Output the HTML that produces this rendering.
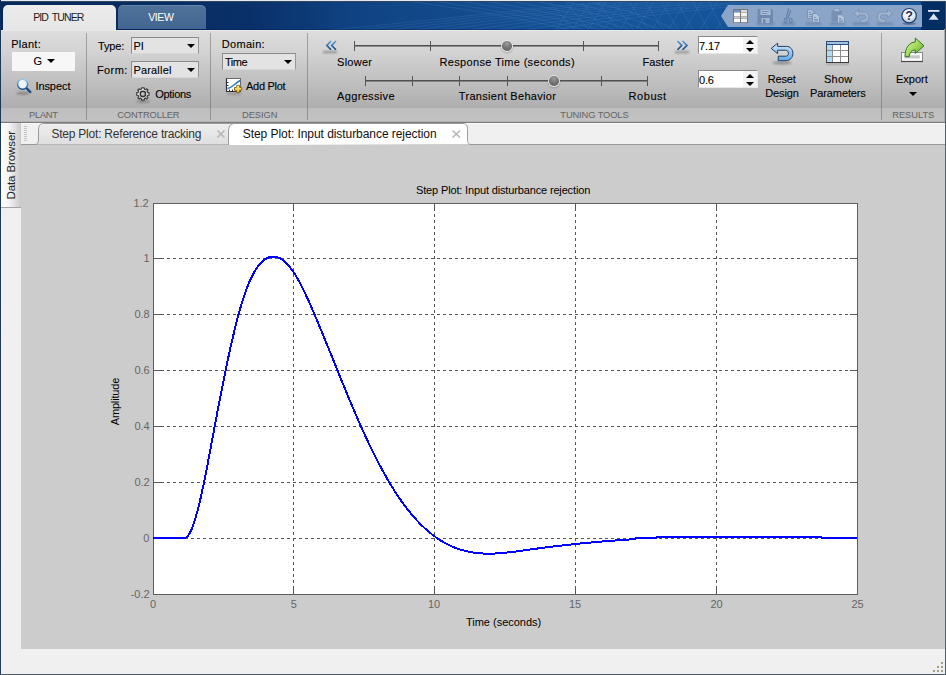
<!DOCTYPE html>
<html><head><meta charset="utf-8"><title>PID Tuner</title>
<style>
html,body{margin:0;padding:0}
body{width:946px;height:675px;overflow:hidden;position:relative;background:#f0f0f0;font-family:"Liberation Sans","DejaVu Sans",sans-serif}
.a{position:absolute}
.t{position:absolute;white-space:nowrap;line-height:1;font-family:"Liberation Sans","DejaVu Sans",sans-serif}
#hdr{left:0;top:0;width:946px;height:30px;background:linear-gradient(90deg,#06295b 0,#0a3069 250px,#0f4282 350px,#134a8c 450px,#16549a 600px,#16549a 921px,#032e63 921px)}
#rib{left:1px;top:30px;width:943px;height:78px;background:linear-gradient(180deg,#dedede 0,#d4d4d4 20px,#bababa 60px,#aeaeae 78px)}
#strip{left:1px;top:108px;width:943px;height:13px;background:linear-gradient(180deg,#bdbdbd,#c3c3c3)}
#ribb{left:1px;top:121px;width:944px;height:3px;background:linear-gradient(180deg,#b2b2b2 0,#b2b2b2 1px,#7e7e7e 1px,#7e7e7e 2px,#f9f9f9 2px)}
.sep{position:absolute;top:33px;height:87px;width:1px;background:rgba(90,90,90,.45)}
.combo{position:absolute;height:15px;background:#e3e3e3;border:1px solid;border-color:#8c8c8c #969696 #d6d6d6 #8c8c8c;box-sizing:content-box}
.arr{position:absolute;width:0;height:0;border-left:4px solid transparent;border-right:4px solid transparent;border-top:4px solid #000}
.arru{position:absolute;width:0;height:0;border-left:4px solid transparent;border-right:4px solid transparent;border-bottom:4px solid #000}
.spin{position:absolute;width:58px;height:16px;background:#fff;border:1px solid;border-color:#8a8a8a #e8e8e8 #e8e8e8 #8a8a8a}
.spin i{position:absolute;right:0;top:0;width:14px;height:16px;background:#f3f3f3}
.sl{position:absolute;height:1px;background:#505050;box-shadow:0 1px 0 rgba(70,70,70,.5)}
.tk{position:absolute;width:1px;height:10px;background:#555}
.knob{position:absolute;width:10px;height:10px;border-radius:50%;background:radial-gradient(circle at 50% 25%,#9c9c9c 0,#7c7c7c 40%,#565656 100%);box-shadow:0 0 0 1px rgba(236,236,236,.95),0 1px 2px 1px rgba(0,0,0,.22)}
svg{position:absolute;overflow:visible}
.g{stroke:#555;stroke-width:1;stroke-dasharray:3 3;shape-rendering:crispEdges}
.k{stroke:#555;stroke-width:1;shape-rendering:crispEdges}
</style></head><body>
<div class="a" id="hdr"></div>
<svg class="a" style="left:0;top:0" width="721" height="30" viewBox="0 0 721 30"><g fill="none" stroke="#7fb0e6" stroke-opacity=".13" stroke-width="1"><path d="M330 30 C420 22 510 10 630 0"/><path d="M358 30 C448 21 538 9 652 0"/><path d="M386 30 C476 20 566 9 674 0"/><path d="M414 30 C504 19 594 8 696 0"/><path d="M442 30 C532 18 622 8 718 0"/><path d="M470 30 C560 17 650 7 740 0"/><path d="M498 30 C588 16 678 7 762 0"/><path d="M526 30 C616 15 706 6 784 0"/><path d="M554 30 C644 14 734 6 806 0"/><path d="M400 0 C460 8 520 18 570 30"/><path d="M426 0 C483 8 539 18 585 30"/><path d="M452 0 C506 8 558 18 600 30"/><path d="M478 0 C529 8 577 18 615 30"/><path d="M504 0 C552 8 596 18 630 30"/><path d="M530 0 C575 8 615 18 645 30"/><path d="M556 0 C598 8 634 18 660 30"/><path d="M582 0 C621 8 653 18 675 30"/><path d="M556 30 L575 0"/><path d="M572 30 L591 0"/><path d="M588 30 L607 0"/><path d="M604 30 L623 0"/><path d="M620 30 L639 0"/><path d="M636 30 L655 0"/><path d="M652 30 L671 0"/><path d="M668 30 L687 0"/><path d="M684 30 L703 0"/><path d="M700 30 L719 0"/><path d="M716 30 L735 0"/><path d="M548 0 L574.0 30"/><path d="M564 0 L588.9 30"/><path d="M580 0 L603.8 30"/><path d="M596 0 L618.7 30"/><path d="M612 0 L633.6 30"/><path d="M628 0 L648.5 30"/><path d="M644 0 L663.4 30"/><path d="M660 0 L678.3 30"/><path d="M676 0 L693.2 30"/><path d="M692 0 L708.1 30"/><path d="M708 0 L723.0 30"/></g></svg>
<!-- ribbon tabs -->
<div class="a" style="left:3px;top:5px;width:113px;height:25px;background:linear-gradient(180deg,#ececec,#e6e6e6);border-radius:5px 5px 0 0"></div>
<div class="a" style="left:118px;top:5px;width:88px;height:24px;background:linear-gradient(180deg,#4f729b,#426690);border-radius:5px 5px 0 0;box-shadow:inset 0 1px 0 rgba(255,255,255,.12)"></div>
<!-- quick access -->
<svg class="a" style="left:720px;top:5px" width="202" height="22" viewBox="0 0 202 22"><path d="M1 11 L8 0 H202 V22 H8 Z" fill="#8ba5c9"/></svg>

<div class="a" id="rib"></div><div class="a" style="left:116px;top:29px;width:830px;height:1px;background:rgba(0,25,90,.35)"></div><div class="a" style="left:1px;top:30px;width:943px;height:1px;background:#ebe9e5"></div><div class="a" id="strip"></div><div class="a" id="ribb"></div>
<div class="sep" style="left:86px"></div><div class="sep" style="left:210px"></div><div class="sep" style="left:307px"></div><div class="sep" style="left:881px"></div>
<!-- plant -->
<div class="a" style="left:12px;top:52px;width:63px;height:19px;background:#f7f7f7"></div>
<div class="arr" style="left:47px;top:59px"></div>
<!-- controller -->
<div class="combo" style="left:131px;top:37px;width:66px"></div><div class="arr" style="left:187px;top:44px"></div>
<div class="combo" style="left:131px;top:61px;width:66px"></div><div class="arr" style="left:187px;top:68px"></div>
<div class="combo" style="left:222px;top:53px;width:72px"></div><div class="arr" style="left:284px;top:60px"></div>
<!-- sliders -->
<div class="sl" style="left:354px;top:45px;width:305px"></div>
<div class="tk" style="left:354px;top:41px"></div><div class="tk" style="left:430px;top:41px"></div><div class="tk" style="left:583px;top:41px"></div><div class="tk" style="left:658px;top:41px"></div>
<div class="sl" style="left:365px;top:80px;width:283px"></div>
<div class="tk" style="left:365px;top:76px"></div><div class="tk" style="left:412px;top:76px"></div><div class="tk" style="left:459px;top:76px"></div><div class="tk" style="left:507px;top:76px"></div><div class="tk" style="left:601px;top:76px"></div><div class="tk" style="left:647px;top:76px"></div>
<div class="knob" style="left:502px;top:41px"></div><div class="knob" style="left:549px;top:76px"></div>
<!-- spinners -->
<div class="spin" style="left:698px;top:36px"><i></i></div><div class="arru" style="left:746px;top:40px"></div><div class="arr" style="left:746px;top:48px"></div>
<div class="spin" style="left:698px;top:70px"><i></i></div><div class="arru" style="left:746px;top:74px"></div><div class="arr" style="left:746px;top:82px"></div>
<div class="arr" style="left:909px;top:92px"></div>

<svg class="a" style="left:0;top:0" width="946" height="675" viewBox="0 0 946 675">
<defs>
<linearGradient id="gb" x1="0" y1="0" x2="0" y2="1"><stop offset="0" stop-color="#5a9ad6"/><stop offset="1" stop-color="#0d4580"/></linearGradient>
<linearGradient id="gring" x1="0" y1="0" x2="0" y2="1"><stop offset="0" stop-color="#9cc6ea"/><stop offset="1" stop-color="#124c88"/></linearGradient>
<linearGradient id="gundo" x1="0" y1="0" x2="0" y2="1"><stop offset="0" stop-color="#cfe8fa"/><stop offset="1" stop-color="#62a8e6"/></linearGradient>
<linearGradient id="ggreen" x1="0" y1="0" x2="1" y2="1"><stop offset="0" stop-color="#e2f6b8"/><stop offset=".5" stop-color="#a4da5c"/><stop offset="1" stop-color="#4e9e28"/></linearGradient>
<linearGradient id="gplus" x1="0" y1="0" x2="0" y2="1"><stop offset="0" stop-color="#fff6b0"/><stop offset="1" stop-color="#e2b01e"/></linearGradient>
<radialGradient id="ggear" cx=".4" cy=".3" r=".8"><stop offset="0" stop-color="#ffffff"/><stop offset="1" stop-color="#b4b4b4"/></radialGradient>
<radialGradient id="ghelp" cx=".45" cy=".3" r=".75"><stop offset="0" stop-color="#ffffff"/><stop offset=".6" stop-color="#e4e8ee"/><stop offset="1" stop-color="#a8b4c4"/></radialGradient>
<filter id="bl" x="-30%" y="-100%" width="160%" height="300%"><feGaussianBlur stdDeviation="1"/></filter>
<filter id="bl2" x="-20%" y="-150%" width="140%" height="400%"><feGaussianBlur stdDeviation=".8"/></filter>
</defs>
<!-- inspect magnifier -->
<ellipse cx="23" cy="93.300" rx="7" ry="1.500" fill="#000" opacity=".28" filter="url(#bl)"/>
<line x1="26.300" y1="88" x2="30.300" y2="92" stroke="#0f4a85" stroke-width="2.400" stroke-linecap="round"/>
<circle cx="22.600" cy="84.300" r="5" fill="#eaf2fa" stroke="url(#gring)" stroke-width="1.500"/>
<path d="M19.500 83.500 a3.200 3.200 0 0 1 3 -2.500" stroke="#fff" stroke-width="1.200" fill="none"/>
<!-- options gear -->
<ellipse cx="143" cy="101.500" rx="7" ry="1.400" fill="#000" opacity=".25" filter="url(#bl)"/>
<g transform="translate(142.900 93.900) scale(.9)">
<path id="gearp" d="M-1.500 -6.800 L1.500 -6.800 L1.800 -5.200 L3.000 -4.700 L4.300 -5.600 L5.600 -4.300 L4.700 -3.000 L5.200 -1.800 L6.800 -1.500 L6.800 1.500 L5.200 1.800 L4.700 3.000 L5.600 4.300 L4.300 5.600 L3.000 4.700 L1.800 5.200 L1.500 6.800 L-1.500 6.800 L-1.800 5.200 L-3.000 4.700 L-4.300 5.600 L-5.600 4.300 L-4.700 3.000 L-5.200 1.800 L-6.800 1.500 L-6.800 -1.500 L-5.200 -1.800 L-4.700 -3.000 L-5.600 -4.300 L-4.300 -5.600 L-3.000 -4.700 L-1.800 -5.200 Z" fill="url(#ggear)" stroke="#3e3e3e" stroke-width="1.350" stroke-linejoin="round"/>
<circle cx="0" cy="0" r="2.900" fill="#c2c2c2" stroke="#2e2e2e" stroke-width="1.500"/>
</g>
<!-- add plot -->
<ellipse cx="234" cy="93.500" rx="8" ry="1.300" fill="#000" opacity=".2" filter="url(#bl)"/>
<rect x="226.500" y="78.500" width="14" height="13" fill="#fff" stroke="#6a6a6a"/>
<path d="M226.500 78.500 V91.500 H240.500" fill="none" stroke="#303030" stroke-width="1.200"/>
<path d="M227 82.500h1.500M227 85.500h1.500M229.500 91v-1.500M232.500 91v-1.500" stroke="#303030" stroke-width="1"/>
<path d="M227.500 88.500 C232 88 234 84 240 80.500" fill="none" stroke="#2f7cc4" stroke-width="1.500"/>
<path d="M236.700 85.300 h2.800 v2.200 h2.200 v2.800 h-2.200 v2.200 h-2.800 v-2.200 h-2.200 v-2.800 h2.200 Z" fill="url(#gplus)" stroke="#8a6414" stroke-width=".9" stroke-linejoin="round"/>
<!-- chevrons -->
<rect x="323" y="51" width="14" height="2.200" fill="#000" opacity=".3" filter="url(#bl)"/>
<path d="M331 41 L326.800 45.400 L331 49.800 M336 41 L331.600 45.400 L336 49.800" fill="none" stroke="url(#gb)" stroke-width="1.600"/>
<rect x="675" y="51" width="14" height="2.200" fill="#000" opacity=".3" filter="url(#bl)"/>
<path d="M677.500 41 L681.800 45.400 L677.500 49.800 M682.500 41 L687 45.400 L682.500 49.800" fill="none" stroke="url(#gb)" stroke-width="1.600"/>
<!-- reset design -->
<ellipse cx="782" cy="62.800" rx="10" ry="1.600" fill="#000" opacity=".3" filter="url(#bl)"/>
<path d="M771.200 48.400 L777.600 43.200 L777.600 46.400 L786.500 46.400 C790.500 46.400 792.900 49.500 792.900 53.500 C792.900 57.500 790 60.700 786 60.700 L778.200 60.700 L778.200 56.200 L785.500 56.200 C787.500 56.200 788.400 55 788.400 53.300 C788.400 51.500 787.500 50.200 785.500 50.200 L777.600 50.200 L777.600 53.600 Z" fill="url(#gundo)" stroke="#1f3f66" stroke-width="1" stroke-linejoin="round"/>
<!-- show parameters table -->
<rect x="826" y="63" width="23" height="2" fill="#000" opacity=".18" filter="url(#bl)"/>
<rect x="826" y="41" width="23" height="22" fill="#8c8c8c"/>
<rect x="826" y="41" width="23" height="4" fill="#2a4a7c"/><rect x="827" y="42" width="21" height="2" fill="#a0c4e0"/>
<rect x="826" y="45" width="1" height="18" fill="#484848"/><rect x="848" y="45" width="1" height="18" fill="#484848"/><rect x="826" y="62" width="23" height="1" fill="#383838"/>
<g fill="#b2dcf6"><rect x="827" y="45" width="5" height="5"/><rect x="827" y="51" width="5" height="5"/><rect x="827" y="57" width="5" height="5"/></g>
<g fill="#fff"><rect x="833" y="45" width="7" height="5"/><rect x="841" y="45" width="7" height="5"/><rect x="833" y="51" width="7" height="5"/><rect x="841" y="51" width="7" height="5"/><rect x="833" y="57" width="7" height="5"/><rect x="841" y="57" width="7" height="5"/></g>
<!-- export -->
<rect x="901.500" y="52.500" width="21" height="9" fill="#fbfbfb" stroke="#8a8a8a"/>
<path d="M901 61.500 H923" stroke="#484848" stroke-width="1.200"/>
<rect x="904.500" y="55.300" width="15.300" height="3.100" fill="#c6c6c6"/>
<path d="M905 56.700 C905 48 909 42.500 915.300 42 L915.300 38 L924 45.800 L915.300 53.600 L915.300 50 C911.500 50 909.500 52.500 909.300 56.700 Z" fill="url(#ggreen)" stroke="#2c7c1c" stroke-width="1" stroke-linejoin="round"/>
<!-- QA icons -->
<g>
<rect x="733" y="9" width="15" height="14" fill="#767676"/>
<rect x="734" y="10" width="6" height="2" fill="#3f72b4"/><rect x="734" y="10.500" width="6" height="1" fill="#8fb6e4"/><rect x="741" y="10" width="6" height="2" fill="#dcdcdc"/>
<rect x="734" y="12.500" width="6" height="4" fill="#fafafa"/><rect x="741" y="12.500" width="6" height="4" fill="#f2f2f2"/>
<rect x="734" y="17" width="6" height="1" fill="#c8c8c8"/><rect x="741" y="17" width="6" height="1" fill="#c8c8c8"/>
<rect x="734" y="18.500" width="6" height="3.700" fill="#fafafa"/><rect x="741" y="18.500" width="6" height="3.700" fill="#f2f2f2"/>
</g>
<g>
<rect x="757" y="22.800" width="17" height="2" fill="#2c4a78" opacity=".38" filter="url(#bl2)"/>
<path d="M757.500 9 H771.500 L773 10.500 V23 H757.500 Z" fill="#6f8aae"/>
<rect x="760.500" y="9.500" width="10" height="5.500" fill="#a9bdd8"/><path d="M762 11.500h7M762 13.500h5" stroke="#7890b2" stroke-width="1"/>
<rect x="761.500" y="18" width="8" height="5" fill="#a2b6d2"/><rect x="763" y="19" width="2.500" height="4" fill="#6f8aae"/>
</g>
<g stroke="#6884ac" fill="none" stroke-width="1.300">
<rect x="782" y="22.800" width="13" height="2" fill="#2c4a78" stroke="none" opacity=".38" filter="url(#bl2)"/>
<path d="M788.800 8 L786.300 18.500 M790.800 10 L787.800 18.500"/>
<ellipse cx="785.600" cy="20.600" rx="1.300" ry="2.200"/><ellipse cx="790.800" cy="20.600" rx="1.300" ry="2.200"/>
</g>
<g>
<rect x="806" y="22.800" width="15" height="2" fill="#2c4a78" opacity=".38" filter="url(#bl2)"/>
<path d="M807.500 9.500 H811.500 L814 12 V18.500 H807.500 Z" fill="#a9bdd8" stroke="#7c94b6" stroke-width="1"/>
<path d="M809 12.500h2M809 14.500h3.500M809 16.500h3.500" stroke="#7c94b6" stroke-width="1"/>
<path d="M812.500 13.500 H816.500 L819.500 16.500 V22.500 H812.500 Z" fill="#b4c6dc" stroke="#7c94b6" stroke-width="1"/>
<path d="M814 17.500h2M814 19.500h4M814 21h4" stroke="#7c94b6" stroke-width="1"/>
</g>
<g>
<rect x="830" y="22.800" width="15" height="2" fill="#2c4a78" opacity=".38" filter="url(#bl2)"/>
<rect x="831.500" y="10.500" width="10.500" height="11" rx="1" fill="#7790b4"/>
<rect x="834" y="8.800" width="5.500" height="2.600" fill="#a9bdd8" stroke="#7c94b6" stroke-width=".8"/>
<path d="M837.500 14.800 H841.500 L844.500 17.500 V23 H837.500 Z" fill="#b4c6dc" stroke="#7c94b6" stroke-width="1"/>
<path d="M839 18.500h2M839 20h4M839 21.600h4" stroke="#7c94b6" stroke-width="1"/>
</g>
<g fill="#a2b5cf" stroke="#7a92b4" stroke-width="1" stroke-linejoin="round">
<rect x="853" y="22.800" width="16" height="2" fill="#2c4a78" stroke="none" opacity=".38" filter="url(#bl2)"/>
<path id="qundo" d="M853.700 13.500 L858.700 9.300 L858.700 12 L864.500 12 C867.500 12 868.900 14.300 868.900 17 C868.900 19.800 867.300 22.300 864.300 22.300 L860.500 22.300 L860.500 19.200 L863.800 19.200 C865.200 19.200 865.800 18.300 865.800 17.100 C865.800 15.900 865.200 15 863.800 15 L858.700 15 L858.700 17.600 Z"/>
<rect x="877" y="22.800" width="16" height="2" fill="#2c4a78" stroke="none" opacity=".38" filter="url(#bl2)"/>
<path d="M892.500 13.500 L887.500 9.300 L887.500 12 L881.700 12 C878.700 12 877.300 14.300 877.300 17 C877.300 19.800 878.900 22.300 881.900 22.300 L885.700 22.300 L885.700 19.200 L882.400 19.200 C881 19.200 880.400 18.300 880.400 17.100 C880.400 15.900 881 15 882.400 15 L887.500 15 L887.500 17.600 Z"/>
</g>
<ellipse cx="909.200" cy="23.600" rx="7" ry="1.300" fill="#1a3050" opacity=".4"/>
<circle cx="909.100" cy="15.700" r="7.200" fill="url(#ghelp)" stroke="#1d3f72" stroke-width="1.200"/>
<text x="909.100" y="20" text-anchor="middle" font-family="Liberation Sans, sans-serif" font-weight="bold" font-size="12.500" fill="#14305c">?</text>
<rect x="928" y="10" width="11.400" height="1.800" fill="#e2eaf4"/>
<path d="M933.700 13.600 L938.600 19.800 H928.800 Z" fill="#dce6f2"/>

</svg>

<!-- doc area -->
<div class="a" style="left:1px;top:123px;width:20px;height:84px;background:linear-gradient(90deg,#fdfdfd 0,#f4f4f4 40%,#c9c9c9 100%)"></div>
<div class="a" style="left:1px;top:207px;width:20px;height:1px;background:#a4a4a4"></div>
<div class="a" style="left:21px;top:144px;width:924px;height:1px;background:#8e8e8e"></div>
<div class="a" style="left:21px;top:145px;width:924px;height:504px;background:#cccccc"></div>
<svg class="a" style="left:0;top:0" width="946" height="675" viewBox="0 0 946 675">
<!-- inactive tab -->
<defs><linearGradient id="gtab" x1="0" y1="0" x2="0" y2="1"><stop offset="0" stop-color="#eeeeee"/><stop offset="1" stop-color="#dedede"/></linearGradient></defs>
<path d="M21.500 144.500 H34.500 C37.800 144.500 38.500 142.500 38.500 139 V130 C38.500 126 40 123.500 43.500 123.500 H234 V144.500" fill="url(#gtab)" stroke="#9a9a9a"/>
<!-- active tab -->
<path d="M228.500 145 V132 C228.500 127 230 123.500 235 123.500 H463 C467.500 123.500 467.500 127 467.500 131 V139 C467.500 143 468.500 144.500 472 144.500" fill="#ffffff" stroke="none"/>
<path d="M228.500 145 V132 C228.500 127 230 123.500 235 123.500 H463 C467.500 123.500 467.500 127 467.500 131 V139 C467.500 143 468.500 144.500 472 144.500 H945" fill="none" stroke="#9a9a9a"/>
<g stroke="#b6b6b6" stroke-width="1.600" fill="none"><path d="M217.500 130.500 l7 7 m0 -7 l-7 7"/><path d="M452.500 130.500 l7.500 7 m0 -7 l-7.500 7"/></g>
<g stroke="#c4c4c4" stroke-width="1" shape-rendering="crispEdges"><path d="M24 126.500h3M24 128.500h3M24 130.500h3M24 132.500h3M24 134.500h3M24 136.500h3M24 138.500h3M24 140.500h3"/></g>
<!-- axes -->
<rect x="153.500" y="203.500" width="704" height="391" fill="#fff" stroke="#5e5e5e" shape-rendering="crispEdges"/>
<line x1="293.5" y1="214" x2="293.5" y2="586" class="g"/>
<line x1="293.5" y1="204" x2="293.5" y2="211" class="k"/><line x1="293.5" y1="586" x2="293.5" y2="594" class="k"/>
<line x1="434.5" y1="214" x2="434.5" y2="586" class="g"/>
<line x1="434.5" y1="204" x2="434.5" y2="211" class="k"/><line x1="434.5" y1="586" x2="434.5" y2="594" class="k"/>
<line x1="575.5" y1="214" x2="575.5" y2="586" class="g"/>
<line x1="575.5" y1="204" x2="575.5" y2="211" class="k"/><line x1="575.5" y1="586" x2="575.5" y2="594" class="k"/>
<line x1="716.5" y1="214" x2="716.5" y2="586" class="g"/>
<line x1="716.5" y1="204" x2="716.5" y2="211" class="k"/><line x1="716.5" y1="586" x2="716.5" y2="594" class="k"/>
<line x1="161" y1="258.5" x2="850" y2="258.5" class="g"/>
<line x1="154" y1="258.5" x2="161" y2="258.5" class="k"/><line x1="850" y1="258.5" x2="857" y2="258.5" class="k"/>
<line x1="161" y1="314.5" x2="850" y2="314.5" class="g"/>
<line x1="154" y1="314.5" x2="161" y2="314.5" class="k"/><line x1="850" y1="314.5" x2="857" y2="314.5" class="k"/>
<line x1="161" y1="370.5" x2="850" y2="370.5" class="g"/>
<line x1="154" y1="370.5" x2="161" y2="370.5" class="k"/><line x1="850" y1="370.5" x2="857" y2="370.5" class="k"/>
<line x1="161" y1="426.5" x2="850" y2="426.5" class="g"/>
<line x1="154" y1="426.5" x2="161" y2="426.5" class="k"/><line x1="850" y1="426.5" x2="857" y2="426.5" class="k"/>
<line x1="161" y1="482.5" x2="850" y2="482.5" class="g"/>
<line x1="154" y1="482.5" x2="161" y2="482.5" class="k"/><line x1="850" y1="482.5" x2="857" y2="482.5" class="k"/>
<line x1="161" y1="538.5" x2="850" y2="538.5" class="g"/>
<line x1="154" y1="538.5" x2="161" y2="538.5" class="k"/><line x1="850" y1="538.5" x2="857" y2="538.5" class="k"/>
<path d="M153,538 L185,538 L186,537.5 L187,536.7 L188,535.7 L189,534.2 L190,532.5 L191,530.5 L192,528.2 L193,525.6 L194,522.7 L195,519.6 L196,516.2 L197,512.6 L198,508.8 L199,504.8 L200,500.7 L201,496.3 L202,491.8 L203,487.1 L204,482.4 L205,477.4 L206,472.4 L207,467.3 L208,462.1 L209,456.9 L210,451.6 L211,446.2 L212,440.9 L213,435.5 L214,430.1 L215,424.8 L216,419.4 L217,414.1 L218,408.9 L219,403.6 L220,398.4 L221,393.3 L222,388.2 L223,383.2 L224,378.2 L225,373.3 L226,368.4 L227,363.6 L228,358.9 L229,354.3 L230,349.7 L231,345.2 L232,340.9 L233,336.6 L234,332.3 L235,328.2 L236,324.2 L237,320.3 L238,316.5 L239,312.8 L240,309.3 L241,305.8 L242,302.5 L243,299.3 L244,296.2 L245,293.3 L246,290.5 L247,287.8 L248,285.3 L249,282.8 L250,280.6 L251,278.4 L252,276.3 L253,274.4 L254,272.6 L255,270.8 L256,269.2 L257,267.7 L258,266.3 L259,265.1 L260,263.9 L261,262.8 L262,261.8 L263,260.9 L264,260.1 L265,259.3 L266,258.7 L267,258.2 L268,257.7 L269,257.3 L270,257.0 L271,256.8 L272,256.6 L273,256.6 L274,256.6 L275,256.7 L276,256.9 L277,257.1 L278,257.4 L279,257.8 L280,258.3 L281,258.9 L282,259.5 L283,260.2 L284,261.0 L285,261.9 L286,262.8 L287,263.8 L288,264.9 L289,266.0 L290,267.2 L291,268.5 L292,269.9 L293,271.3 L294,272.8 L295,274.4 L296,276.0 L297,277.7 L298,279.4 L299,281.2 L300,283.1 L301,285.0 L302,286.9 L303,289.0 L304,291.0 L305,293.1 L306,295.2 L307,297.4 L308,299.6 L309,301.8 L310,304.0 L311,306.3 L312,308.6 L313,310.9 L314,313.3 L315,315.6 L316,318.0 L317,320.4 L318,322.7 L319,325.1 L320,327.5 L321,329.9 L322,332.4 L323,334.8 L324,337.2 L325,339.7 L326,342.1 L327,344.6 L328,347.0 L329,349.5 L330,352.0 L331,354.4 L332,356.9 L333,359.4 L334,361.8 L335,364.3 L336,366.8 L337,369.2 L338,371.7 L339,374.2 L340,376.6 L341,379.1 L342,381.5 L343,384.0 L344,386.4 L345,388.8 L346,391.3 L347,393.7 L348,396.1 L349,398.5 L350,400.9 L351,403.3 L352,405.6 L353,408.0 L354,410.3 L355,412.7 L356,415.0 L357,417.3 L358,419.6 L359,421.9 L360,424.2 L361,426.4 L362,428.7 L363,430.9 L364,433.1 L365,435.3 L366,437.4 L367,439.6 L368,441.7 L369,443.8 L370,445.9 L371,448.0 L372,450.0 L373,452.1 L374,454.1 L375,456.1 L376,458.0 L377,460.0 L378,461.9 L379,463.8 L380,465.7 L381,467.6 L382,469.5 L383,471.3 L384,473.1 L385,474.9 L386,476.6 L387,478.4 L388,480.1 L389,481.8 L390,483.5 L391,485.2 L392,486.8 L393,488.4 L394,490.0 L395,491.6 L396,493.1 L397,494.6 L398,496.1 L399,497.6 L400,499.1 L401,500.5 L402,501.9 L403,503.3 L404,504.7 L405,506.0 L406,507.3 L407,508.6 L408,509.9 L409,511.2 L410,512.4 L411,513.6 L412,514.8 L413,516.0 L414,517.1 L415,518.3 L416,519.4 L417,520.5 L418,521.5 L419,522.6 L420,523.6 L421,524.6 L422,525.6 L423,526.6 L424,527.5 L425,528.4 L426,529.3 L427,530.2 L428,531.1 L429,531.9 L430,532.8 L431,533.6 L432,534.4 L433,535.2 L434,535.9 L435,536.6 L436,537.4 L437,538.1 L438,538.7 L439,539.4 L440,540.1 L441,540.7 L442,541.3 L443,541.9 L444,542.5 L445,543.0 L446,543.6 L447,544.1 L448,544.6 L449,545.1 L450,545.6 L451,546.0 L452,546.5 L453,546.9 L454,547.3 L455,547.7 L456,548.1 L457,548.4 L458,548.8 L459,549.1 L460,549.5 L461,549.8 L462,550.1 L463,550.3 L464,550.6 L465,550.9 L466,551.1 L467,551.3 L468,551.6 L469,551.8 L470,552.0 L471,552.1 L472,552.3 L473,552.5 L474,552.6 L475,552.7 L476,552.9 L477,553.0 L478,553.1 L479,553.2 L480,553.3 L481,553.3 L482,553.4 L483,553.5 L484,553.5 L485,553.5 L486,553.6 L487,553.6 L488,553.6 L489,553.6 L490,553.6 L491,553.6 L492,553.6 L493,553.5 L494,553.5 L495,553.5 L496,553.4 L497,553.4 L498,553.3 L499,553.2 L500,553.2 L501,553.1 L502,553.0 L503,552.9 L504,552.8 L505,552.8 L506,552.7 L507,552.5 L508,552.4 L509,552.3 L510,552.2 L511,552.1 L512,552.0 L513,551.9 L514,551.7 L515,551.6 L516,551.5 L517,551.3 L518,551.2 L519,551.1 L520,550.9 L521,550.8 L522,550.6 L523,550.5 L524,550.4 L525,550.2 L526,550.1 L527,549.9 L528,549.8 L529,549.7 L530,549.5 L531,549.4 L532,549.2 L533,549.1 L534,549.0 L535,548.8 L536,548.7 L537,548.6 L538,548.4 L539,548.3 L540,548.2 L541,548.0 L542,547.9 L543,547.8 L544,547.7 L545,547.5 L546,547.4 L547,547.3 L548,547.1 L549,547.0 L550,546.9 L551,546.8 L552,546.7 L553,546.5 L554,546.4 L555,546.3 L556,546.2 L557,546.1 L558,545.9 L559,545.8 L560,545.7 L561,545.6 L562,545.5 L563,545.4 L564,545.2 L565,545.1 L566,545.0 L567,544.9 L568,544.8 L569,544.7 L570,544.6 L571,544.5 L572,544.4 L573,544.3 L574,544.2 L575,544.1 L576,544.0 L577,543.8 L578,543.7 L579,543.6 L580,543.5 L581,543.4 L582,543.3 L583,543.2 L584,543.1 L585,543.0 L586,543.0 L587,542.9 L588,542.8 L589,542.7 L590,542.6 L591,542.5 L592,542.4 L593,542.3 L594,542.2 L595,542.1 L596,542.0 L597,541.9 L598,541.8 L599,541.8 L600,541.7 L601,541.6 L602,541.5 L603,541.4 L604,541.3 L605,541.3 L606,541.2 L607,541.1 L608,541.0 L609,540.9 L610,540.8 L611,540.8 L612,540.7 L613,540.6 L614,540.5 L615,540.5 L616,540.4 L617,540.3 L618,540.2 L619,540.2 L620,540.1 L621,540.0 L622,539.9 L623,539.9 L624,539.8 L625,539.7 L626,539.7 L627,539.6 L628,539.5 L629,539.5 L630,539.4 L631,539.3 L632,539.3 L633,539.2 L634,539.1 L635,539.1 L636,538.0 L637,538.0 L638,538.0 L639,538.0 L640,538.0 L641,538.0 L642,538.0 L643,538.0 L644,538.0 L645,538.0 L646,538.0 L647,538.0 L648,538.0 L649,538.0 L650,538.0 L651,538.0 L652,538.0 L653,538.0 L654,538.0 L655,538.0 L656,538.0 L657,537.0 L658,537.0 L659,537.0 L660,537.0 L661,537.0 L662,537.0 L663,537.0 L664,537.0 L665,537.0 L666,537.0 L667,537.0 L668,537.0 L669,537.0 L670,537.0 L671,537.0 L672,537.0 L673,537.0 L674,537.0 L675,537.0 L676,537.0 L677,537.0 L678,537.0 L679,537.0 L680,537.0 L681,537.0 L682,537.0 L683,537.0 L684,537.0 L685,537.0 L686,537.0 L687,537.0 L688,537.0 L689,537.0 L690,537.0 L691,537.0 L692,537.0 L693,537.0 L694,537.0 L695,537.0 L696,537.0 L697,537.0 L698,537.0 L699,537.0 L700,537.0 L701,537.0 L702,537.0 L703,537.0 L704,537.0 L705,537.0 L706,537.0 L707,537.0 L708,537.0 L709,537.0 L710,537.0 L711,537.0 L712,537.0 L713,537.0 L714,537.0 L715,537.0 L716,537.0 L717,537.0 L718,537.0 L719,537.0 L720,537.0 L721,537.0 L722,537.0 L723,537.0 L724,537.0 L725,537.0 L726,537.0 L727,537.0 L728,537.0 L729,537.0 L730,537.0 L731,537.0 L732,537.0 L733,537.0 L734,537.0 L735,537.0 L736,537.0 L737,537.0 L738,537.0 L739,537.0 L740,537.0 L741,537.0 L742,537.0 L743,537.0 L744,537.0 L745,537.0 L746,537.0 L747,537.0 L748,537.0 L749,537.0 L750,537.0 L751,537.0 L752,537.0 L753,537.0 L754,537.0 L755,537.0 L756,537.0 L757,537.0 L758,537.0 L759,537.0 L760,537.0 L761,537.0 L762,537.0 L763,537.0 L764,537.0 L765,537.0 L766,537.0 L767,537.0 L768,537.0 L769,537.0 L770,537.0 L771,537.0 L772,537.0 L773,537.0 L774,537.0 L775,537.0 L776,537.0 L777,537.0 L778,537.0 L779,537.0 L780,537.0 L781,537.0 L782,537.0 L783,537.0 L784,537.0 L785,537.0 L786,537.0 L787,537.0 L788,537.0 L789,537.0 L790,537.0 L791,537.0 L792,537.0 L793,537.0 L794,537.0 L795,537.0 L796,537.0 L797,537.0 L798,537.0 L799,537.0 L800,537.0 L801,537.0 L802,537.0 L803,537.0 L804,537.0 L805,537.0 L806,537.0 L807,537.0 L808,537.0 L809,537.0 L810,537.0 L811,537.0 L812,537.0 L813,537.0 L814,537.0 L815,537.0 L816,537.0 L817,537.0 L818,537.0 L819,537.0 L820,537.0 L821,537.0 L822,538.0 L823,538.0 L824,538.0 L825,538.0 L826,538.0 L827,538.0 L828,538.0 L829,538.0 L830,538.0 L831,538.0 L832,538.0 L833,538.0 L834,538.0 L835,538.0 L836,538.0 L837,538.0 L838,538.0 L839,538.0 L840,538.0 L841,538.0 L842,538.0 L843,538.0 L844,538.0 L845,538.0 L846,538.0 L847,538.0 L848,538.0 L849,538.0 L850,538.0 L851,538.0 L852,538.0 L853,538.0 L854,538.0 L855,538.0 L856,538.0 L857,538.0" fill="none" stroke="#0000ff" stroke-width="2" shape-rendering="crispEdges" stroke-linejoin="round"/>
<!-- resize grip -->
<g fill="#a39f87"><rect x="941" y="662" width="2" height="2"/><rect x="937" y="666" width="2" height="2"/><rect x="941" y="666" width="2" height="2"/><rect x="933" y="670" width="2" height="2"/><rect x="937" y="670" width="2" height="2"/><rect x="941" y="670" width="2" height="2"/></g>
</svg>
<span class="t" id="db" style="left:0;top:0;font-size:11.500px;letter-spacing:-.1px;color:#222;transform-origin:0 0;transform:translate(5.500px,199.500px) rotate(-90deg)">Data Browser</span>
<span class="t" id="amp" style="left:0;top:0;font-size:11px;letter-spacing:-.15px;color:#000;transform-origin:0 0;transform:translate(109.700px,425.300px) rotate(-90deg)">Amplitude</span>
<span class="t" id="t0" style="left:33.20px;top:11.81px;font-size:10.5px;color:#222;letter-spacing:-0.900px;word-spacing:2px">PID TUNER</span>
<span class="t" id="t1" style="left:148.20px;top:11.81px;font-size:10.5px;color:#fff;letter-spacing:-0.367px">VIEW</span>
<span class="t" id="t2" style="left:11.20px;top:39.39px;font-size:11px;color:#000;letter-spacing:0.280px;-webkit-text-stroke:.1px #000">Plant:</span>
<span class="t" id="t3" style="left:33.50px;top:55.79px;font-size:11px;color:#000;letter-spacing:0.000px;-webkit-text-stroke:.1px #000">G</span>
<span class="t" id="t4" style="left:35.40px;top:81.19px;font-size:11px;color:#000;letter-spacing:-0.067px;-webkit-text-stroke:.1px #000">Inspect</span>
<span class="t" id="t5" style="left:98.00px;top:41.09px;font-size:11px;color:#000;letter-spacing:-0.175px;-webkit-text-stroke:.1px #000">Type:</span>
<span class="t" id="t6" style="left:133.40px;top:41.09px;font-size:11px;color:#000;letter-spacing:0.000px;-webkit-text-stroke:.1px #000">PI</span>
<span class="t" id="t7" style="left:97.00px;top:65.09px;font-size:11px;color:#000;letter-spacing:0.375px;-webkit-text-stroke:.1px #000">Form:</span>
<span class="t" id="t8" style="left:133.40px;top:65.09px;font-size:11px;color:#000;letter-spacing:0.186px;-webkit-text-stroke:.1px #000">Parallel</span>
<span class="t" id="t9" style="left:155.30px;top:89.09px;font-size:11px;color:#000;letter-spacing:-0.333px;-webkit-text-stroke:.1px #000">Options</span>
<span class="t" id="t10" style="left:221.70px;top:39.09px;font-size:11px;color:#000;letter-spacing:0.333px;-webkit-text-stroke:.1px #000">Domain:</span>
<span class="t" id="t11" style="left:225.00px;top:57.09px;font-size:11px;color:#000;letter-spacing:-0.500px;-webkit-text-stroke:.1px #000">Time</span>
<span class="t" id="t12" style="left:246.00px;top:80.69px;font-size:11px;color:#000;letter-spacing:-0.286px;-webkit-text-stroke:.1px #000">Add Plot</span>
<span class="t" id="t13" style="left:337.10px;top:56.89px;font-size:11px;color:#000;letter-spacing:0.240px;-webkit-text-stroke:.1px #000">Slower</span>
<span class="t" id="t14" style="left:439.50px;top:56.89px;font-size:11px;color:#000;letter-spacing:0.332px;-webkit-text-stroke:.1px #000">Response Time (seconds)</span>
<span class="t" id="t15" style="left:642.40px;top:56.89px;font-size:11px;color:#000;letter-spacing:0.100px;-webkit-text-stroke:.1px #000">Faster</span>
<span class="t" id="t16" style="left:337.10px;top:90.79px;font-size:11px;color:#000;letter-spacing:0.333px;-webkit-text-stroke:.1px #000">Aggressive</span>
<span class="t" id="t17" style="left:458.80px;top:90.79px;font-size:11px;color:#000;letter-spacing:0.306px;-webkit-text-stroke:.1px #000">Transient Behavior</span>
<span class="t" id="t18" style="left:628.60px;top:90.79px;font-size:11px;color:#000;letter-spacing:0.540px;-webkit-text-stroke:.1px #000">Robust</span>
<span class="t" id="t19" style="left:699.00px;top:40.89px;font-size:11px;color:#000;letter-spacing:-0.133px;-webkit-text-stroke:.1px #000">7.17</span>
<span class="t" id="t20" style="left:699.00px;top:74.69px;font-size:11px;color:#000;letter-spacing:-0.150px;-webkit-text-stroke:.1px #000">0.6</span>
<span class="t" id="t21" style="left:767.70px;top:74.09px;font-size:11px;color:#000;letter-spacing:-0.175px;-webkit-text-stroke:.1px #000">Reset</span>
<span class="t" id="t22" style="left:765.30px;top:88.09px;font-size:11px;color:#000;letter-spacing:-0.120px;-webkit-text-stroke:.1px #000">Design</span>
<span class="t" id="t23" style="left:823.90px;top:74.29px;font-size:11px;color:#000;letter-spacing:0.300px;-webkit-text-stroke:.1px #000">Show</span>
<span class="t" id="t24" style="left:810.10px;top:88.19px;font-size:11px;color:#000;letter-spacing:-0.122px;-webkit-text-stroke:.1px #000">Parameters</span>
<span class="t" id="t25" style="left:895.90px;top:74.29px;font-size:11px;color:#000;letter-spacing:0.020px;-webkit-text-stroke:.1px #000">Export</span>
<span class="t" id="t26" style="left:29.10px;top:110.80px;font-size:9.33px;color:#646464;letter-spacing:-0.300px">PLANT</span>
<span class="t" id="t27" style="left:117.30px;top:110.80px;font-size:9.33px;color:#646464;letter-spacing:-0.178px">CONTROLLER</span>
<span class="t" id="t28" style="left:242.00px;top:110.80px;font-size:9.33px;color:#646464;letter-spacing:-0.060px">DESIGN</span>
<span class="t" id="t29" style="left:560.30px;top:110.80px;font-size:9.33px;color:#646464;letter-spacing:-0.118px">TUNING TOOLS</span>
<span class="t" id="t30" style="left:892.20px;top:110.80px;font-size:9.33px;color:#646464;letter-spacing:-0.033px">RESULTS</span>
<span class="t" id="t31" style="left:51.40px;top:128.24px;font-size:12px;color:#333;letter-spacing:-0.218px">Step Plot: Reference tracking</span>
<span class="t" id="t32" style="left:242.80px;top:128.24px;font-size:12px;color:#111;letter-spacing:-0.062px">Step Plot: Input disturbance rejection</span>
<span class="t" id="t33" style="left:416.00px;top:184.79px;font-size:11px;color:#000;letter-spacing:-0.149px">Step Plot: Input disturbance rejection</span>
<span class="t" id="t34" style="left:466.00px;top:617.19px;font-size:11px;color:#000;letter-spacing:-0.015px">Time (seconds)</span>
<span class="t" id="t35" style="left:150.10px;top:599.39px;font-size:11px;color:#666;letter-spacing:0.000px">0</span>
<span class="t" id="t36" style="left:290.70px;top:599.39px;font-size:11px;color:#666;letter-spacing:0.000px">5</span>
<span class="t" id="t37" style="left:427.90px;top:599.39px;font-size:11px;color:#666;letter-spacing:0.000px">10</span>
<span class="t" id="t38" style="left:568.90px;top:599.39px;font-size:11px;color:#666;letter-spacing:0.000px">15</span>
<span class="t" id="t39" style="left:710.50px;top:599.39px;font-size:11px;color:#666;letter-spacing:0.000px">20</span>
<span class="t" id="t40" style="left:851.50px;top:599.39px;font-size:11px;color:#666;letter-spacing:0.000px">25</span>
<span class="t" id="t41" style="left:133.40px;top:197.59px;font-size:11px;color:#666;letter-spacing:0.000px">1.2</span>
<span class="t" id="t42" style="left:143.60px;top:253.09px;font-size:11px;color:#666;letter-spacing:0.000px">1</span>
<span class="t" id="t43" style="left:134.40px;top:309.09px;font-size:11px;color:#666;letter-spacing:0.000px">0.8</span>
<span class="t" id="t44" style="left:134.40px;top:365.09px;font-size:11px;color:#666;letter-spacing:0.000px">0.6</span>
<span class="t" id="t45" style="left:134.40px;top:420.89px;font-size:11px;color:#666;letter-spacing:0.000px">0.4</span>
<span class="t" id="t46" style="left:134.40px;top:476.79px;font-size:11px;color:#666;letter-spacing:0.000px">0.2</span>
<span class="t" id="t47" style="left:143.20px;top:532.59px;font-size:11px;color:#666;letter-spacing:0.000px">0</span>
<span class="t" id="t48" style="left:130.70px;top:588.59px;font-size:11px;color:#666;letter-spacing:0.000px">-0.2</span>
<!-- window borders -->
<div class="a" id="topl" style="left:0;top:0;width:946px;height:2px;background:linear-gradient(180deg,#e2eaf3 0,#e2eaf3 1px,#35455a 1px)"></div>
<div class="a" style="left:0;top:0;width:1px;height:675px;background:linear-gradient(180deg,#0a2d63 0,#0a2d63 30px,#1b3859 31px,#223b5a 100%)"></div>
<div class="a" style="left:945px;top:1px;width:1px;height:674px;background:linear-gradient(180deg,#484c56 0,#484c56 30px,#4d6278 31px)"></div>
<div class="a" style="left:944px;top:29px;width:1px;height:93px;background:#a9a9a9"></div>
<div class="a" style="left:0;top:674px;width:946px;height:1px;background:#4a5a6c"></div>
</body></html>
